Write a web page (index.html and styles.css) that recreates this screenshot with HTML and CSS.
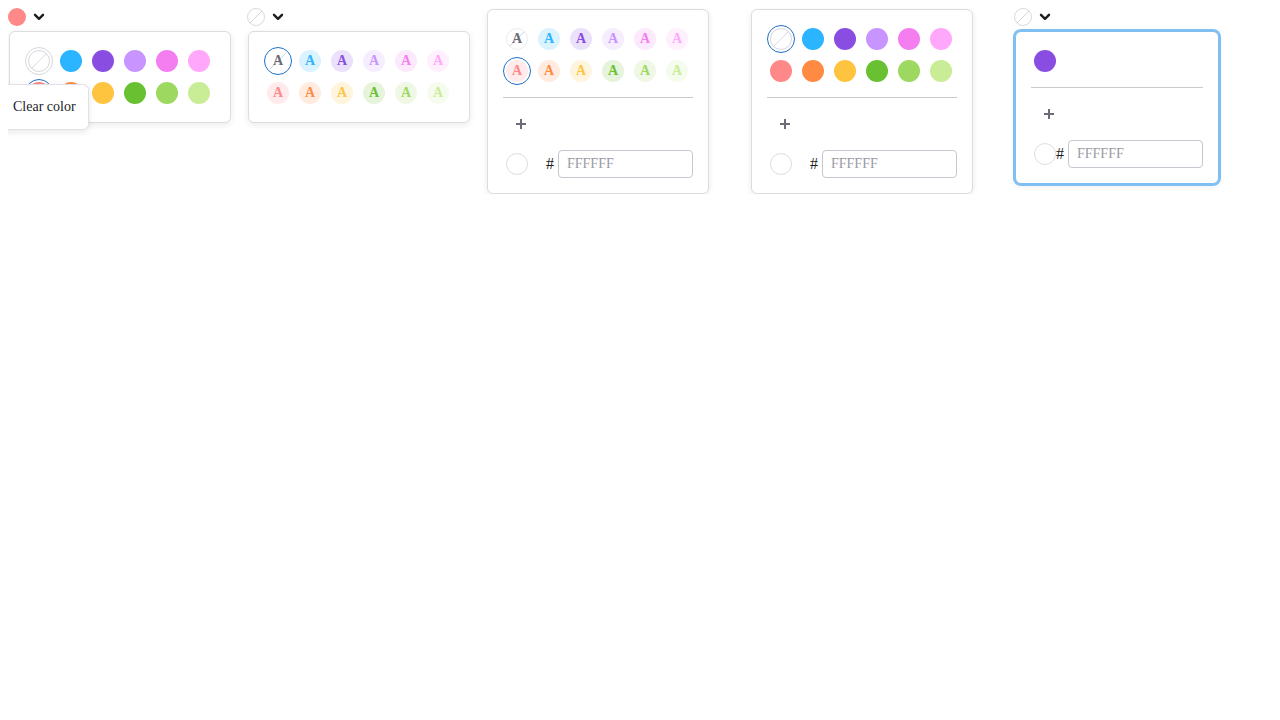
FILE: index.html
```html
<!DOCTYPE html>
<html lang="en">
<head>
<meta charset="utf-8">
<title>Color pickers</title>
<link rel="stylesheet" href="styles.css">
</head>
<body>
<div class="page">

  <!-- Picker 1: fill colours, tooltip shown -->
  <div class="picker">
    <button class="trigger" type="button">
      <span class="dot c-red"></span>
      <svg class="chev" viewBox="0 0 12 8"><path d="M2 1.8 L6 5.8 L10 1.8"/></svg>
    </button>
    <div class="popup">
      <div class="grid">
        <div class="cell is-hover"><span class="sw sw-none"></span><div class="tooltip">Clear color</div></div>
        <div class="cell"><span class="sw c-blue"></span></div>
        <div class="cell"><span class="sw c-purple"></span></div>
        <div class="cell"><span class="sw c-lilac"></span></div>
        <div class="cell"><span class="sw c-pink"></span></div>
        <div class="cell"><span class="sw c-lpink"></span></div>
        <div class="cell is-selected"><span class="sw c-red"></span></div>
        <div class="cell"><span class="sw c-orange"></span></div>
        <div class="cell"><span class="sw c-yellow"></span></div>
        <div class="cell"><span class="sw c-green"></span></div>
        <div class="cell"><span class="sw c-lgreen"></span></div>
        <div class="cell"><span class="sw c-pgreen"></span></div>
      </div>
    </div>
  </div>

  <!-- Picker 2: text colours -->
  <div class="picker">
    <button class="trigger" type="button">
      <span class="dot dot-none"></span>
      <svg class="chev" viewBox="0 0 12 8"><path d="M2 1.8 L6 5.8 L10 1.8"/></svg>
    </button>
    <div class="popup">
      <div class="grid">
        <div class="cell is-selected"><span class="tsw tsw-none">A</span></div>
        <div class="cell"><span class="tsw c-blue">A</span></div>
        <div class="cell"><span class="tsw c-purple">A</span></div>
        <div class="cell"><span class="tsw c-lilac">A</span></div>
        <div class="cell"><span class="tsw c-pink">A</span></div>
        <div class="cell"><span class="tsw c-lpink">A</span></div>
        <div class="cell"><span class="tsw c-red">A</span></div>
        <div class="cell"><span class="tsw c-orange">A</span></div>
        <div class="cell"><span class="tsw c-yellow">A</span></div>
        <div class="cell"><span class="tsw c-green">A</span></div>
        <div class="cell"><span class="tsw c-lgreen">A</span></div>
        <div class="cell"><span class="tsw c-pgreen">A</span></div>
      </div>
    </div>
  </div>

  <!-- Picker 3: inline text colours with custom -->
  <div class="picker picker--spaced">
    <div class="popup popup--inline">
      <div class="grid">
        <div class="cell"><span class="tsw tsw-none tsw-bordered">A</span></div>
        <div class="cell"><span class="tsw c-blue">A</span></div>
        <div class="cell"><span class="tsw c-purple">A</span></div>
        <div class="cell"><span class="tsw c-lilac">A</span></div>
        <div class="cell"><span class="tsw c-pink">A</span></div>
        <div class="cell"><span class="tsw c-lpink">A</span></div>
        <div class="cell is-selected"><span class="tsw c-red">A</span></div>
        <div class="cell"><span class="tsw c-orange">A</span></div>
        <div class="cell"><span class="tsw c-yellow">A</span></div>
        <div class="cell"><span class="tsw c-green">A</span></div>
        <div class="cell"><span class="tsw c-lgreen">A</span></div>
        <div class="cell"><span class="tsw c-pgreen">A</span></div>
      </div>
      <div class="divider"></div>
      <button class="add" type="button"><svg viewBox="0 0 10 10"><path d="M5 0 V10 M0 5 H10"/></svg></button>
      <div class="custom">
        <div class="cell cell--custom"><span class="sw sw-blank"></span></div>
        <div class="hexgroup"><span class="hash">#</span><input class="hex" type="text" placeholder="FFFFFF"></div>
      </div>
    </div>
  </div>

  <!-- Picker 4: inline fill colours with custom -->
  <div class="picker picker--spaced">
    <div class="popup popup--inline">
      <div class="grid">
        <div class="cell is-selected"><span class="sw sw-none"></span></div>
        <div class="cell"><span class="sw c-blue"></span></div>
        <div class="cell"><span class="sw c-purple"></span></div>
        <div class="cell"><span class="sw c-lilac"></span></div>
        <div class="cell"><span class="sw c-pink"></span></div>
        <div class="cell"><span class="sw c-lpink"></span></div>
        <div class="cell"><span class="sw c-red"></span></div>
        <div class="cell"><span class="sw c-orange"></span></div>
        <div class="cell"><span class="sw c-yellow"></span></div>
        <div class="cell"><span class="sw c-green"></span></div>
        <div class="cell"><span class="sw c-lgreen"></span></div>
        <div class="cell"><span class="sw c-pgreen"></span></div>
      </div>
      <div class="divider"></div>
      <button class="add" type="button"><svg viewBox="0 0 10 10"><path d="M5 0 V10 M0 5 H10"/></svg></button>
      <div class="custom">
        <div class="cell cell--custom"><span class="sw sw-blank"></span></div>
        <div class="hexgroup"><span class="hash">#</span><input class="hex" type="text" placeholder="FFFFFF"></div>
      </div>
    </div>
  </div>

  <!-- Picker 5: focused, single colour -->
  <div class="picker">
    <button class="trigger" type="button">
      <span class="dot dot-none"></span>
      <svg class="chev" viewBox="0 0 12 8"><path d="M2 1.8 L6 5.8 L10 1.8"/></svg>
    </button>
    <div class="popup popup--focus">
      <div class="grid">
        <div class="cell"><span class="sw c-purple"></span></div>
      </div>
      <div class="divider"></div>
      <button class="add" type="button"><svg viewBox="0 0 10 10"><path d="M5 0 V10 M0 5 H10"/></svg></button>
      <div class="custom">
        <div class="cell cell--custom"><span class="sw sw-blank"></span></div>
        <div class="hexgroup"><span class="hash">#</span><input class="hex" type="text" placeholder="FFFFFF"></div>
      </div>
    </div>
  </div>

</div>
</body>
</html>
```

FILE: styles.css
```css
* {
  box-sizing: border-box;
}

body {
  margin: 8px;
  background: #ffffff;
  color: #1c1c1f;
  font-family: "Liberation Serif", "Times New Roman", serif;
  font-size: 16px;
}

.page {
  display: flex;
  align-items: flex-start;
  gap: 16px;
}

.picker {
  display: flex;
  flex-direction: column;
  align-items: flex-start;
}

.picker--spaced {
  margin-right: 25px;
}

/* trigger */
.trigger {
  display: flex;
  align-items: center;
  height: 18px;
  padding: 0;
  border: 0;
  background: none;
  cursor: pointer;
}

.dot {
  display: block;
  width: 18px;
  height: 18px;
  border-radius: 50%;
  background: var(--c);
}

.dot-none {
  border: 1px solid #d9d9df;
  background: linear-gradient(to bottom right, transparent calc(50% - 0.7px), #d6d6dc 50%, transparent calc(50% + 0.7px)), #fff;
}

.chev {
  width: 12px;
  height: 8px;
  margin-left: 7px;
}

.chev path {
  fill: none;
  stroke: #1d1d22;
  stroke-width: 2.4;
  stroke-linecap: round;
  stroke-linejoin: round;
}

/* popup */
.popup {
  width: 222px;
  margin: 5px 0 0 1px;
  padding: 15px;
  background: #fff;
  border: 1px solid #dcdce2;
  border-radius: 6px;
  box-shadow: 0 2px 6px rgba(30, 30, 50, 0.09);
}

.popup--inline {
  margin-top: 1px;
}

.popup--focus {
  width: 204px;
  border-color: #7fbff1;
  box-shadow: 0 0 0 2px #7fbff1, 0 2px 6px rgba(30, 30, 50, 0.09);
}

.grid {
  display: grid;
  grid-template-columns: repeat(6, 28px);
  gap: 4px;
}

.cell {
  position: relative;
  width: 28px;
  height: 28px;
  display: flex;
  align-items: center;
  justify-content: center;
  border: 1px solid transparent;
  border-radius: 50%;
}

.cell.is-selected {
  border-color: #1f70c8;
}

.cell.is-hover {
  border-color: #d6d6dc;
}

.sw {
  display: block;
  flex: none;
  width: 22px;
  height: 22px;
  border-radius: 50%;
  background: var(--c);
}

.sw-none {
  border: 1px solid #d6d6dc;
  background: linear-gradient(to bottom right, transparent calc(50% - 0.7px), #d8d8de 50%, transparent calc(50% + 0.7px)), #fff;
}

.sw-blank {
  border: 1px solid #dedee4;
  background: #fff;
}

/* text swatches */
.tsw {
  display: block;
  flex: none;
  width: 22px;
  height: 22px;
  border-radius: 50%;
  background: color-mix(in srgb, var(--c) 17%, #ffffff);
  color: var(--c);
  font-family: "Liberation Serif", "Times New Roman", serif;
  font-weight: bold;
  font-size: 14px;
  line-height: 22px;
  text-align: center;
}

.tsw-none {
  color: #6b6b75;
  background: linear-gradient(to bottom right, transparent calc(50% - 0.6px), #d0d0d6 50%, transparent calc(50% + 0.6px)), #fff;
}

.tsw-bordered {
  border: 1px solid #ececf0;
  line-height: 20px;
}

/* colours */
.c-blue { --c: #2bb4ff; }
.c-purple { --c: #8a4de2; }
.c-lilac { --c: #c894ff; }
.c-pink { --c: #f47ef0; }
.c-lpink { --c: #ffa8fb; }
.c-red { --c: #ff8888; }
.c-orange { --c: #ff8b43; }
.c-yellow { --c: #ffc43f; }
.c-green { --c: #69c132; }
.c-lgreen { --c: #9dd860; }
.c-pgreen { --c: #c9ec97; }

/* tooltip */
.tooltip {
  position: absolute;
  top: calc(100% + 10px);
  left: -26px;
  z-index: 5;
  padding: 13px 12px;
  background: #fff;
  border: 1px solid #e0e0e6;
  border-radius: 6px;
  box-shadow: 0 2px 6px rgba(30, 30, 50, 0.1);
  color: #222226;
  font-size: 14px;
  line-height: 18px;
  white-space: nowrap;
}

/* custom colour section */
.divider {
  height: 1px;
  margin: 12px 0;
  background: #c9c9cf;
}

.add {
  display: flex;
  align-items: center;
  justify-content: center;
  width: 36px;
  height: 28px;
  padding: 0;
  border: 0;
  background: none;
}

.add svg {
  width: 10px;
  height: 10px;
}

.add path {
  stroke: #6c6c76;
  stroke-width: 2;
  fill: none;
}

.custom {
  display: flex;
  align-items: center;
  justify-content: space-between;
  height: 28px;
  margin-top: 12px;
}

.cell--custom {
  flex: 0 1 28px;
  min-width: 0;
  justify-content: flex-start;
  padding-left: 2px;
}

.hexgroup {
  display: flex;
  align-items: center;
  gap: 4px;
  flex: none;
}

.hash {
  font-size: 16px;
  line-height: 18px;
  width: 8px;
}

.hex {
  width: 135px;
  height: 28px;
  padding: 0 8px;
  border: 1px solid #c7c7cf;
  border-radius: 4px;
  background: #fff;
  color: #222;
  font-family: "Liberation Serif", "Times New Roman", serif;
  font-size: 14px;
  outline: none;
}

.hex::placeholder {
  color: #9a9aa4;
}
```
